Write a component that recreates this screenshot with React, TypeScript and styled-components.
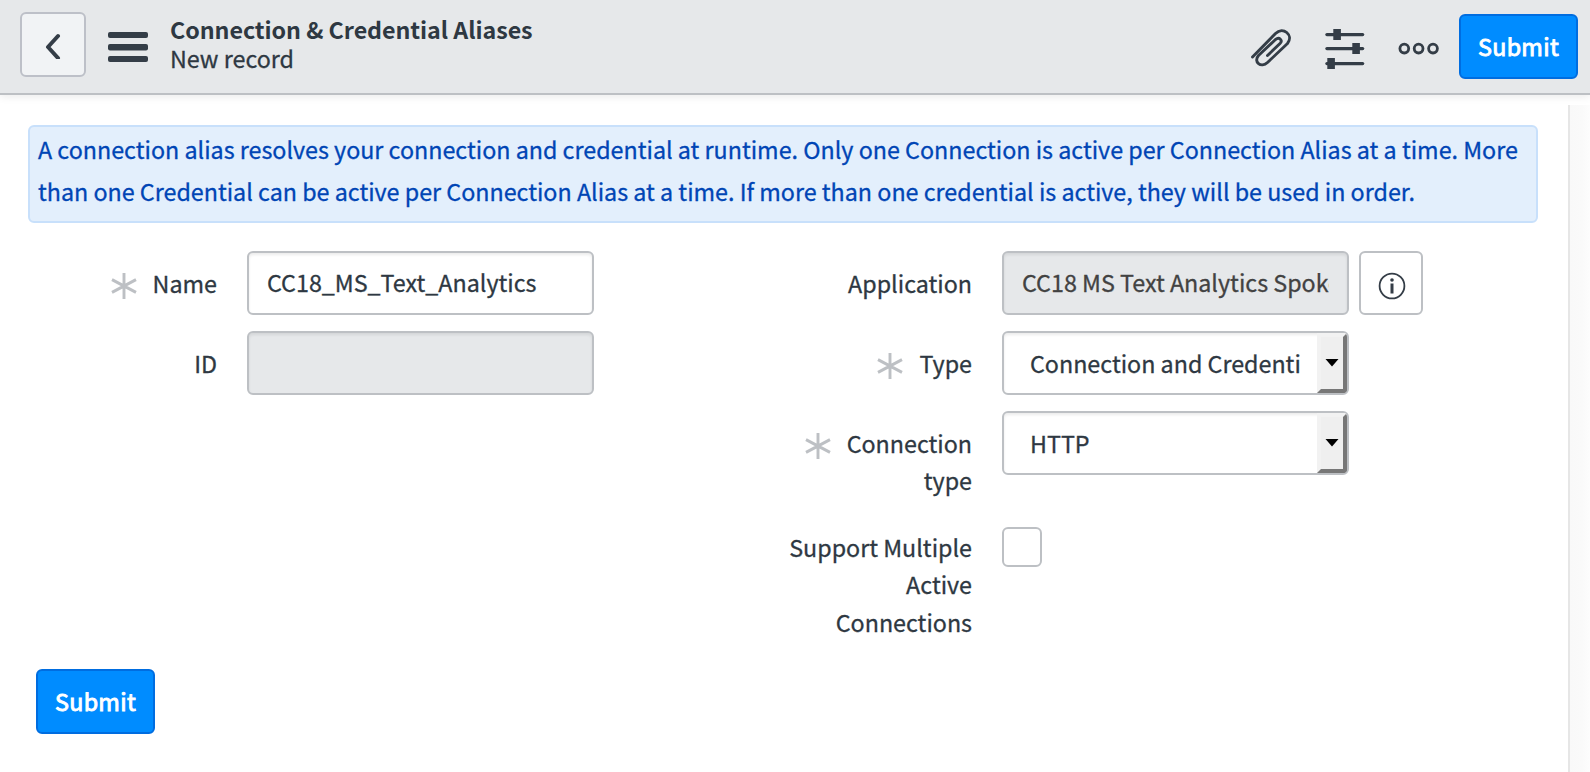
import React from "react";
import styled, { createGlobalStyle, css } from "styled-components";

const GlobalStyle = createGlobalStyle`
  * { box-sizing: border-box; }
  html, body { margin: 0; padding: 0; background: #fff; overflow: hidden; }
  body, input, button { font-family: "Noto Sans CJK SC", "Noto Sans", sans-serif; }
`;

const Page = styled.div`
  width: 1590px;
  height: 772px;
  display: flex;
  flex-direction: column;
  color: #2e3842;
  font-size: 23.29px;
  -webkit-text-stroke: 0.3px;
  background: #fff;
`;

const Header = styled.header`
  flex: none;
  height: 95px;
  display: flex;
  align-items: flex-start;
  padding: 12px 12px 0 20px;
  background: #e6e8ea;
  border-bottom: 2px solid #bdc0c4;
  box-shadow: 0 2px 8px rgba(0, 0, 0, 0.08);
`;

const BackButton = styled.button`
  width: 66px;
  height: 65px;
  padding: 0;
  display: flex;
  align-items: center;
  justify-content: center;
  background: #f1f3f5;
  border: 2px solid #bdc0c8;
  border-radius: 6px;
`;

const MenuButton = styled.button`
  margin: 20px 0 0 22px;
  padding: 0;
  width: 40px;
  height: 31px;
  border: 0;
  background: none;
  display: flex;
`;

const Titles = styled.div`
  margin: 3px 0 0 22px;
  display: flex;
  flex-direction: column;
  flex: 1;
`;

const Title = styled.h1`
  margin: 0;
  font-size: 23.29px;
  line-height: 29px;
  font-weight: 700;
  letter-spacing: -0.06px;
  -webkit-text-stroke: 0;
`;

const Subtitle = styled.span`
  line-height: 29px;
`;

const Tools = styled.div`
  display: flex;
  align-items: flex-start;
  padding-top: 2px;
`;

const ToolButton = styled.button<{ $w: number; $gap: number }>`
  width: ${(p) => p.$w}px;
  height: 70px;
  margin-right: ${(p) => p.$gap}px;
  padding: 0;
  border: 0;
  background: none;
  display: flex;
`;

const SubmitButton = styled.button`
  flex: none;
  width: 119px;
  height: 65px;
  padding: 0 0 1px;
  font-size: 23.29px;
  line-height: 36px;
  font-weight: 400;
  letter-spacing: 0.3px;
  -webkit-text-stroke: 0.9px;
  color: #fff;
  background: #008cff;
  border: 2px solid #006de0;
  border-radius: 6px;
`;

const Body = styled.div`
  flex: 1;
  display: flex;
  padding-top: 10px;
`;

const Content = styled.main`
  flex: 1;
  padding: 20px 30px 0 28px;
`;

const Gutter = styled.aside`
  width: 22px;
  border-left: 2px solid #e6e6e6;
  background: linear-gradient(90deg, #f9f9f9, #fafafa 60%, #fdfdfd);
`;

const Callout = styled.p`
  margin: 0;
  height: 98px;
  padding: 2px 8px 0;
  line-height: 41.7px;
  color: #0045b5;
  background: #e3effc;
  border: 2px solid #c8e0fb;
  border-radius: 6px;
  white-space: nowrap;
`;

const Columns = styled.div`
  display: grid;
  grid-template-columns: 755px 1fr;
  height: 418px;
  padding-top: 28px;
`;

const Column = styled.div`
  display: flex;
  flex-direction: column;
  gap: 16px;
`;

const Row = styled.div<{ $tall?: boolean }>`
  display: flex;
  align-items: flex-start;
  height: ${(p) => (p.$tall ? 100 : 64)}px;
`;

const LabelCell = styled.label`
  width: 189px;
  margin-right: 30px;
  padding-top: 14px;
  display: flex;
  justify-content: flex-end;
  align-items: flex-start;
  text-align: right;
  line-height: 37.4px;
`;

const Required = styled.svg`
  flex: none;
  width: 26px;
  height: 26px;
  margin: 8px 16px 0 0;
`;

const fieldBox = css`
  width: 347px;
  height: 64px;
  border: 2px solid #bdc0c4;
  border-radius: 6px;
  color: #2e3842;
  font-size: 23.29px;
  -webkit-text-stroke: 0.3px;
`;

const TextInput = styled.input`
  ${fieldBox}
  padding: 0 18px 2px;
  background: #fff;
  box-shadow: inset 0 2px 3px rgba(0, 0, 0, 0.08);
  outline: none;
  &:read-only {
    background: #e6e8ea;
    color: #424242;
  }
`;

const Select = styled.div`
  ${fieldBox}
  display: flex;
  overflow: hidden;
  background: #fff;
  box-shadow: inset 0 2px 3px rgba(0, 0, 0, 0.08);
`;

const SelectValue = styled.span`
  width: 313px;
  padding-left: 26px;
  line-height: 60px;
  white-space: nowrap;
`;

const SelectArrow = styled.span`
  width: 30px;
  height: 60px;
  border: 4px solid;
  border-color: #f2f2f2 #777 #777 #f2f2f2;
  background: #efefef;
  display: flex;
  justify-content: center;
  padding-top: 22px;
`;

const InfoButton = styled.button`
  width: 64px;
  height: 64px;
  margin-left: 10px;
  padding: 5px 0 0 2px;
  display: flex;
  align-items: center;
  justify-content: center;
  background: #fff;
  border: 2px solid #bdc0c4;
  border-radius: 6px;
`;

const Checkbox = styled.input`
  appearance: none;
  width: 40px;
  height: 40px;
  margin: 0;
  border: 2px solid #bdc0c4;
  border-radius: 6px;
  background: #fff;
`;

const Footer = styled.div`
  padding: 28px 0 0 8px;
`;

const CheckRow = styled(Row)`
  height: 120px;
  ${LabelCell} { padding-top: 2px; }
`;

const Asterisk = () => (
  <Required viewBox="0 0 26 26" stroke="#bdc0c4" strokeWidth="2.9">
    <path d="M13 0V26M1 6.6L25 19.4M25 6.6L1 19.4" />
  </Required>
);

const ArrowGlyph = () => (
  <svg width="14" height="8" viewBox="0 0 14 8">
    <path d="M0.500 0H13.500L7 7.500Z" fill="#000" />
  </svg>
);

function Field(props: { label: React.ReactNode; required?: boolean; tall?: boolean; children: React.ReactNode }) {
  return (
    <Row $tall={props.tall}>
      <LabelCell>
        {props.required && <Asterisk />}
        <span>{props.label}</span>
      </LabelCell>
      {props.children}
    </Row>
  );
}

export default function App() {
  return (
    <>
      <GlobalStyle />
      <Page>
        <Header>
          <BackButton aria-label="Back">
            <svg width="16" height="28" viewBox="0 0 16 28" fill="none" stroke="#343d47" strokeWidth="4" strokeLinecap="round" strokeLinejoin="round">
              <path d="M13 5L3 16L13 27" />
            </svg>
          </BackButton>
          <MenuButton aria-label="Menu">
            <svg width="40" height="31" fill="#343d47">
              <rect y="0" width="40" height="6" rx="2" />
              <rect y="12" width="40" height="6.5" rx="2" />
              <rect y="24" width="40" height="6" rx="2" />
            </svg>
          </MenuButton>
          <Titles>
            <Title>Connection &amp; Credential Aliases</Title>
            <Subtitle>New record</Subtitle>
          </Titles>
          <Tools>
            <ToolButton $w={42} $gap={33} aria-label="Attachments">
              <svg width="42" height="70" viewBox="1250 14 42 70" fill="none" stroke="#343d47" strokeWidth="2.9" strokeLinecap="round" strokeLinejoin="round">
                <path d="M1252.500 57L1275.500 33.500C1283 26 1294 35 1287.500 43.500L1267.500 62.500C1261 68.500 1253 62 1258.500 55.500L1275.500 39.500C1279.500 36.500 1283 40.500 1280 43.500L1267.500 55.500" />
              </svg>
            </ToolButton>
            <ToolButton $w={40} $gap={33} aria-label="Settings">
              <svg width="40" height="70" viewBox="1325 14 40 70" fill="#343d47">
                <rect x="1325.300" y="33" width="39" height="3.200" rx="1.600" />
                <rect x="1325.300" y="47" width="39" height="3.200" rx="1.600" />
                <rect x="1325.300" y="62" width="39" height="3.200" rx="1.600" />
                <rect x="1333.300" y="29" width="7.600" height="11" />
                <rect x="1352.300" y="43" width="7.600" height="11" />
                <rect x="1327.300" y="58" width="7.600" height="11" />
              </svg>
            </ToolButton>
            <ToolButton $w={42} $gap={19} aria-label="More options">
              <svg width="42" height="70" viewBox="1398 14 42 70" fill="none" stroke="#343d47" strokeWidth="2.800">
                <circle cx="1404.300" cy="48.600" r="4.400" />
                <circle cx="1418.600" cy="48.600" r="4.400" />
                <circle cx="1433" cy="48.600" r="4.400" />
              </svg>
            </ToolButton>
            <SubmitButton>Submit</SubmitButton>
          </Tools>
        </Header>
        <Body>
          <Content>
            <Callout>
              A connection alias resolves your connection and credential at runtime. Only one Connection is active per Connection Alias at a time. More
              <br />
              than one Credential can be active per Connection Alias at a time. If more than one credential is active, they will be used in order.
            </Callout>
            <Columns>
              <Column>
                <Field label="Name" required>
                  <TextInput defaultValue="CC18_MS_Text_Analytics" />
                </Field>
                <Field label="ID">
                  <TextInput readOnly />
                </Field>
              </Column>
              <Column>
                <Field label="Application">
                  <TextInput readOnly value="CC18 MS Text Analytics Spoke" />
                  <InfoButton aria-label="Application details">
                    <svg width="28" height="28" viewBox="0 0 28 28" fill="none" stroke="#343d47">
                      <circle cx="14" cy="14" r="12.400" strokeWidth="1.800" />
                      <path d="M14 11.500V21.500" strokeWidth="3" />
                      <circle cx="14" cy="8" r="1.800" fill="#343d47" stroke="none" />
                    </svg>
                  </InfoButton>
                </Field>
                <Field label="Type" required>
                  <Select>
                    <SelectValue>Connection and Credenti</SelectValue>
                    <SelectArrow><ArrowGlyph /></SelectArrow>
                  </Select>
                </Field>
                <Field label={<>Connection<br />type</>} required tall>
                  <Select>
                    <SelectValue>HTTP</SelectValue>
                    <SelectArrow><ArrowGlyph /></SelectArrow>
                  </Select>
                </Field>
                <CheckRow>
                  <LabelCell>
                    <span>Support Multiple<br />Active<br />Connections</span>
                  </LabelCell>
                  <Checkbox type="checkbox" />
                </CheckRow>
              </Column>
            </Columns>
            <Footer>
              <SubmitButton>Submit</SubmitButton>
            </Footer>
          </Content>
          <Gutter />
        </Body>
      </Page>
    </>
  );
}
